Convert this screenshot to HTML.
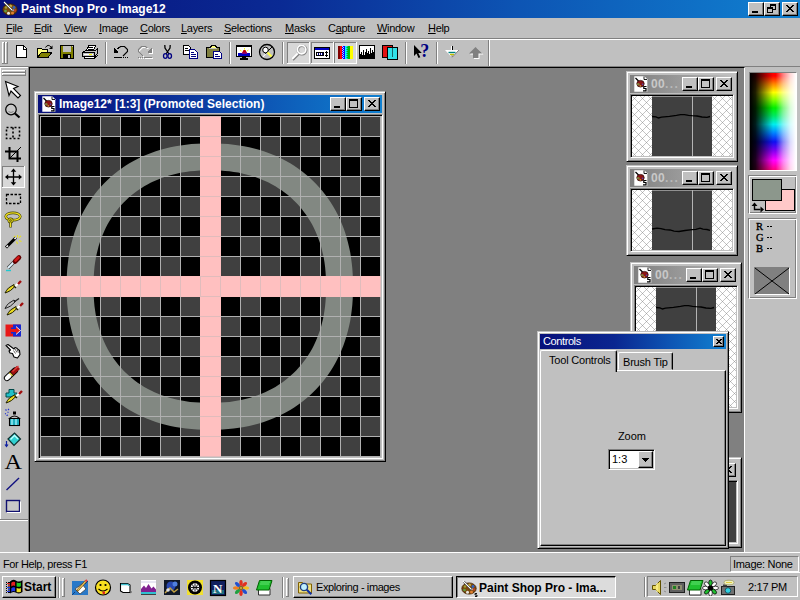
<!DOCTYPE html>
<html><head><meta charset="utf-8">
<style>
*{box-sizing:border-box;margin:0;padding:0}
html,body{width:800px;height:600px;overflow:hidden;background:#c0c0c0;font-family:"Liberation Sans",sans-serif;font-size:11px;color:#000}
.a{position:absolute}
svg{position:absolute;overflow:visible}
#title{left:0;top:0;width:800px;height:18px;background:linear-gradient(90deg,#08107a 0%,#0a2a94 35%,#0d55b4 65%,#1080d0 100%)}
.tt{color:#fff;font-weight:bold;font-size:12px;line-height:14px;white-space:nowrap}
.cb{position:absolute;background:#c0c0c0;border:1px solid;border-color:#fff #000 #000 #fff;box-shadow:inset -1px -1px 0 #808080}
#menu{left:0;top:18px;width:800px;height:20px;background:#c0c0c0}
#menu span{position:absolute;top:4px;font-size:11px;line-height:13px;white-space:nowrap;letter-spacing:-0.300px}
#menu u{text-decoration:underline}
#tb{left:0;top:38px;width:800px;height:29px;background:#c0c0c0;border-top:1px solid #808080;box-shadow:inset 0 1px 0 #fff}
#ws{left:29px;top:67px;width:716px;height:486px;background:#808080;border:1px solid;border-color:#000 #fff #fff #000}
#tools{left:0;top:67px;width:29px;height:485px;background:#c0c0c0}
#status{left:0;top:552px;width:800px;height:20px;background:#c0c0c0;border-top:1px solid #fff}
#task{left:0;top:572px;width:800px;height:28px;background:#c0c0c0;border-top:1px solid #fff}
.win{position:absolute;background:#c0c0c0;border:1px solid;border-color:#c0c0c0 #000 #000 #c0c0c0;box-shadow:inset 1px 1px 0 #fff,inset -1px -1px 0 #808080}
.ce{position:absolute;border:1px solid;border-color:#808080 #fff #fff #808080;box-shadow:inset 1px 1px 0 #000,inset -1px -1px 0 #c0c0c0}
.tbar{position:absolute;height:18px}
.act{background:linear-gradient(90deg,#08107a 0%,#0a2a94 35%,#0d55b4 65%,#1080d0 100%)}
.ina{background:linear-gradient(90deg,#808080 0%,#a0a0a0 60%,#c0c0c0 100%)}
</style></head><body>
<div id="title" class="a"><svg width="18" height="16" style="left:1px;top:1px" viewBox="0 0 18 16"><ellipse cx="9" cy="8.500" rx="7.200" ry="5.600" fill="#7a4a10"/><ellipse cx="9" cy="8.500" rx="7.200" ry="5.600" fill="none" stroke="#402000" stroke-width=".8"/><circle cx="9.500" cy="5" r="1.500" fill="#c8b040"/><circle cx="13" cy="6.500" r="1.400" fill="#3060c0"/><circle cx="14" cy="9.500" r="1.300" fill="#c04020"/><circle cx="11.500" cy="12" r="1.500" fill="#e08030"/><circle cx="7.500" cy="12.300" r="1.500" fill="#e8e8e0"/><circle cx="4.500" cy="10" r="1.300" fill="#60a040"/><circle cx="5" cy="6.500" r="1.200" fill="#a0a030"/><circle cx="12" cy="9.300" r="1" fill="#c0c0c0"/><path d="M3.800 1.800l8 8" stroke="#101010" stroke-width="2"/><path d="M3 1l8.500 8.500" stroke="#fff" stroke-width="1.100"/></svg><div class="a tt" style="left:21px;top:2px">Paint Shop Pro - Image12</div>
<div class="cb" style="left:748px;top:2px;width:16px;height:14px"><svg width="14" height="12" style="left:0;top:0" shape-rendering="crispEdges"><path d="M3 8h6v2H3z" fill="#000"/></svg></div>
<div class="cb" style="left:764px;top:2px;width:16px;height:14px"><svg width="14" height="12" style="left:0;top:0" shape-rendering="crispEdges"><path d="M5 1h6v6H8V6h2V3H6v1H5zM2 4h6v6H2zM3 6v3h4V6z" fill="#000" fill-rule="evenodd"/></svg></div>
<div class="cb" style="left:782px;top:2px;width:16px;height:14px"><svg width="14" height="12" style="left:0;top:0" shape-rendering="crispEdges"><path d="M3 2h2v1h-2zM9 2h2v1h-2zM4 3h2v1h-2zM8 3h2v1h-2zM5 4h4v1h-4zM6 5h2v1h-2zM5 6h4v1h-4zM4 7h2v1h-2zM8 7h2v1h-2zM3 8h2v1h-2zM9 8h2v1h-2z" fill="#000"/></svg></div>
</div>
<div id="menu" class="a">
<span style="left:6px"><u>F</u>ile</span><span style="left:34px"><u>E</u>dit</span><span style="left:64px"><u>V</u>iew</span><span style="left:99px"><u>I</u>mage</span><span style="left:140px"><u>C</u>olors</span><span style="left:181px"><u>L</u>ayers</span><span style="left:224px"><u>S</u>elections</span><span style="left:285px"><u>M</u>asks</span><span style="left:328px">C<u>a</u>pture</span><span style="left:377px"><u>W</u>indow</span><span style="left:428px"><u>H</u>elp</span>
</div>
<div id="tb" class="a"></div>
<div id="tools" class="a"></div>
<div id="ws" class="a"></div>
<svg class="a" style="left:0;top:38px" width="800" height="30" viewBox="0 38 800 30" shape-rendering="crispEdges">
<defs><pattern id="dith" width="2" height="2" patternUnits="userSpaceOnUse"><rect width="2" height="2" fill="#c0c0c0"/><rect width="1" height="1" fill="#fff"/><rect x="1" y="1" width="1" height="1" fill="#fff"/></pattern></defs>
<!-- toolbar frame -->
<rect x="0" y="38" width="800" height="1" fill="#808080"/><rect x="0" y="39" width="800" height="1" fill="#fff"/>
<rect x="0" y="66" width="800" height="1" fill="#808080"/>
<rect x="488" y="40" width="1" height="26" fill="#808080"/><rect x="489" y="40" width="1" height="26" fill="#fff"/>
<!-- grip -->
<g id="grip"><rect x="2" y="42" width="3" height="22" fill="#c0c0c0"/><rect x="2" y="42" width="1" height="22" fill="#fff"/><rect x="2" y="42" width="3" height="1" fill="#fff"/><rect x="4" y="42" width="1" height="22" fill="#808080"/><rect x="2" y="63" width="3" height="1" fill="#808080"/></g>
<use href="#grip" x="3"/>
<!-- separators -->
<g fill="#808080"><rect x="105" y="42" width="1" height="22"/><rect x="229" y="42" width="1" height="22"/><rect x="282" y="42" width="1" height="22"/><rect x="405" y="42" width="1" height="22"/><rect x="436" y="42" width="1" height="22"/></g>
<g fill="#fff"><rect x="106" y="42" width="1" height="22"/><rect x="230" y="42" width="1" height="22"/><rect x="283" y="42" width="1" height="22"/><rect x="406" y="42" width="1" height="22"/><rect x="437" y="42" width="1" height="22"/></g>
<!-- pressed (checked) buttons -->
<g id="pb"><rect x="287" y="42" width="23" height="22" fill="#d8d8d8"/><rect x="287" y="42" width="23" height="1" fill="#808080"/><rect x="287" y="42" width="1" height="22" fill="#808080"/><rect x="287" y="63" width="23" height="1" fill="#fff"/><rect x="309" y="42" width="1" height="22" fill="#fff"/></g>
<use href="#pb" x="24"/><use href="#pb" x="47"/>
<!-- new -->
<path d="M16.500 45.500h7l3 3v9h-10z" fill="#fff" stroke="#000" stroke-width="1" shape-rendering="crispEdges"/><path d="M23 46v3h3" fill="none" stroke="#000"/>
<!-- open -->
<path d="M37.500 57.500v-9.500h3.500l1 1.500h5.500v3" fill="#ffff80" stroke="#000"/><path d="M38 49h3l1 1h5v2h-6l-3 5z" fill="#ffff80"/>
<path d="M37.500 57.500l4-5.500h10.500l-4 5.500z" fill="#808000" stroke="#000"/>
<path d="M45.500 47.500q2.500-4 5.500-0.500" fill="none" stroke="#000" shape-rendering="geometricPrecision"/><path d="M52.500 45.500v3.500h-3.500z" fill="#000" shape-rendering="geometricPrecision"/>
<!-- save -->
<rect x="60.500" y="45.500" width="13" height="13" fill="#808000" stroke="#000"/><rect x="63" y="46" width="8" height="6" fill="#c0c0c0"/><rect x="63" y="54" width="8" height="4" fill="#000"/><rect x="68" y="55" width="2" height="3" fill="#c0c0c0"/><rect x="72" y="46" width="1" height="1" fill="#c0c0c0"/>
<!-- print -->
<path d="M86.500 50.500l2-5h7l-2 5z" fill="#fff" stroke="#000"/><path d="M88 47.500h5M87.500 49h5" stroke="#000" fill="none"/>
<path d="M82.500 52.500l3-2h10l2-2v5l-3 3.500v-4.500z" fill="#c0c0c0" stroke="#000"/>
<rect x="82.500" y="52.500" width="12" height="4" fill="#c0c0c0" stroke="#000"/><rect x="84" y="54" width="9" height="1" fill="#fff"/><rect x="89" y="54" width="3" height="1" fill="#ffff00"/>
<path d="M84.500 56.500v2h10l3-3" fill="none" stroke="#000"/><rect x="85" y="57" width="9" height="1" fill="#fff"/>
<!-- undo -->
<g id="undo"><path d="M114 48h1v1h-1zM114 49h2v1h-2zM114 50h3v1h-3zM114 51h4v1h-4zM114 52h4v1h-4z M117 48h1v1h-1z M118 47h1v2h-1z" fill="#000"/><path d="M118.500 47.500h1l1-1h4l3 3v2l-4.500 4.500" fill="none" stroke="#000" shape-rendering="geometricPrecision" stroke-width="1.100"/><rect x="114" y="57" width="8" height="1"/><rect x="123" y="57" width="1" height="1"/><rect x="125" y="57" width="1" height="1"/><rect x="127" y="57" width="1" height="1"/></g>
<!-- redo (disabled) -->
<g transform="translate(267 1) scale(-1 1)" fill="#fff" stroke="#fff"><path d="M114 48h1v1h-1zM114 49h2v1h-2zM114 50h3v1h-3zM114 51h4v1h-4zM114 52h4v1h-4z" stroke="none"/><path d="M118.500 47.500h1l1-1h4l3 3v2l-4.500 4.500" fill="none" shape-rendering="geometricPrecision" stroke-width="1.100"/><rect x="114" y="57" width="8" height="1" stroke="none"/><rect x="123" y="57" width="1" height="1" stroke="none"/><rect x="125" y="57" width="1" height="1" stroke="none"/><rect x="127" y="57" width="1" height="1" stroke="none"/></g>
<g transform="translate(266 0) scale(-1 1)" fill="#808080" stroke="#808080"><path d="M114 48h1v1h-1zM114 49h2v1h-2zM114 50h3v1h-3zM114 51h4v1h-4zM114 52h4v1h-4z" stroke="none"/><path d="M118.500 47.500h1l1-1h4l3 3v2l-4.500 4.500" fill="none" shape-rendering="geometricPrecision" stroke-width="1.100"/><rect x="114" y="57" width="8" height="1" stroke="none"/><rect x="123" y="57" width="1" height="1" stroke="none"/><rect x="125" y="57" width="1" height="1" stroke="none"/><rect x="127" y="57" width="1" height="1" stroke="none"/></g>
<!--TB2S--><!-- cut -->
<g shape-rendering="geometricPrecision"><path d="M164.800 45l.2 3 4 6M170.200 45l-.2 3-4 6" fill="none" stroke="#000" stroke-width="1.300"/><ellipse cx="165.300" cy="56" rx="1.800" ry="2.400" fill="none" stroke="#000080" stroke-width="1.300"/><ellipse cx="169.700" cy="56" rx="1.800" ry="2.400" fill="none" stroke="#000080" stroke-width="1.300"/></g>
<!-- copy -->
<path d="M183.500 45.500h5l2 2v6.500h-7z" fill="#fff" stroke="#000"/><path d="M185 48h3M185 50h4" stroke="#000"/>
<path d="M189.500 49.500h5l3 3v5.500h-8z" fill="#fff" stroke="#000080"/><path d="M191 52h3M191 54h5M191 56h5" stroke="#000080" stroke-width="1" transform="translate(0 .5)"/>
<!-- paste -->
<path d="M206.500 47.500h13v10h-13z" fill="#808040" stroke="#000"/><path d="M210.500 47.500l1-2h4l1 2v1h-6z" fill="#ffff80" stroke="#000"/><rect x="209" y="48" width="8" height="1" fill="#c0c0c0"/>
<path d="M213.500 51.500h6l2 2v5h-8z" fill="#fff" stroke="#000080"/><path d="M215 54.500h3M215 56.500h5" stroke="#000080"/>
<!-- monitor -->
<rect x="236.500" y="45.500" width="15" height="11" fill="#fff" stroke="#000" stroke-width="1"/><rect x="237" y="46" width="14" height="1" fill="#000"/><rect x="238" y="53" width="12" height="3" fill="#0000c0"/><rect x="238" y="52" width="12" height="1" fill="#fff"/>
<path d="M242 53l1.500-3h2l1.500 3z" fill="#c00000" shape-rendering="geometricPrecision"/><path d="M241.500 54l1-1.500h4l1 1.500z" fill="#800080" shape-rendering="geometricPrecision"/><path d="M240 50l1.500 1M248.500 50l-1.500 1M244.500 48v1.500" stroke="#ffff00" shape-rendering="geometricPrecision"/>
<rect x="242" y="57" width="4" height="1" fill="#000"/><rect x="240" y="58" width="8" height="2" fill="#000"/>
<!-- circle -->
<g shape-rendering="geometricPrecision"><circle cx="267" cy="52" r="7.500" fill="#c0c0c0" stroke="#000" stroke-width="1.300"/><path d="M262 57l10-10" stroke="#000" stroke-width="1"/><circle cx="265.500" cy="50" r="2.800" fill="#fff" stroke="#000" stroke-width="1"/><path d="M267.500 52.500l4 4" stroke="#ffff40" stroke-width="2.200"/><path d="M262.500 57l3-3" stroke="#fff" stroke-width="1.200"/></g>
<!-- zoom tool -->
<g shape-rendering="geometricPrecision"><path d="M292.500 59.500l6-6" stroke="#808080" stroke-width="3.200"/><path d="M292 59l6-6" stroke="#fff" stroke-width="2.200"/><circle cx="302" cy="50" r="4.200" fill="none" stroke="#808080" stroke-width="2.600"/><circle cx="301.600" cy="49.600" r="4.200" fill="none" stroke="#fff" stroke-width="1.800"/></g>
<!-- controls -->
<rect x="314.500" y="47.500" width="15" height="11" fill="#fff" stroke="#000"/><rect x="315" y="48" width="14" height="2" fill="#0000c0"/><rect x="316.500" y="52.500" width="7" height="3" fill="#fff" stroke="#000"/><rect x="318" y="53" width="1" height="2" fill="#000080"/><rect x="320" y="53" width="1" height="2" fill="#000080"/><rect x="322" y="53" width="1" height="2" fill="#000080"/><path d="M326.500 51v6M325 52.500h3M325 55.500h3" stroke="#000"/>
<!-- palette -->
<g><rect x="338" y="46" width="2" height="13" fill="#800000"/><rect x="340" y="46" width="3" height="13" fill="#ff0000"/><rect x="342" y="46" width="3" height="13" fill="#0000ff"/><rect x="345" y="46" width="2" height="13" fill="#00ffff"/><rect x="347" y="46" width="3" height="13" fill="#00c000"/><rect x="350" y="46" width="3" height="13" fill="#ffff00"/>
<path d="M342 46h1v1h-1zM343 47h1v1h-1zM342 48h1v1h-1zM343 49h1v1h-1zM342 50h1v1h-1zM343 51h1v1h-1zM342 52h1v1h-1zM343 53h1v1h-1zM342 54h1v1h-1zM343 55h1v1h-1zM342 56h1v1h-1zM343 57h1v1h-1zM342 58h1v1h-1z" fill="#c0c0ff"/>
<path d="M347 46h1v1h-1zM346 47h1v1h-1zM347 48h1v1h-1zM346 49h1v1h-1zM347 50h1v1h-1zM346 51h1v1h-1zM347 52h1v1h-1zM346 53h1v1h-1zM347 54h1v1h-1zM346 55h1v1h-1zM347 56h1v1h-1zM346 57h1v1h-1zM347 58h1v1h-1z" fill="#00c0a0"/></g>
<!-- histogram -->
<rect x="359.500" y="45.500" width="15" height="13" fill="#fff" stroke="#000"/><path d="M360 58v-4h1v-2h1v3h1v-5h1v5h1v-3h1v-3h1v4h1v-2h1v3h1v-6h1v5h1v-3h1v2h1v6z" fill="#000"/>
<!-- layers -->
<rect x="382.500" y="45.500" width="10" height="12" fill="#e01010" stroke="#000"/><rect x="387.500" y="47.500" width="10" height="12" fill="#30e0e8" stroke="#000"/><rect x="392" y="48" width="1" height="9" fill="#000" opacity=".55"/>
<!-- help -->
<path d="M414 45v11l2.500-2.500 2 4.500 1.800-.8-2-4.200h3.500z" fill="#000" shape-rendering="geometricPrecision"/>
<text x="420.300" y="56.800" font-family="Liberation Serif" font-weight="bold" font-size="18" fill="#000080" shape-rendering="geometricPrecision">?</text>
<!-- down arrow -->
<g shape-rendering="geometricPrecision"><path d="M445 50h14l-7 7.500z" fill="#fff"/><path d="M459 50l-7 7.500" stroke="#808080" stroke-width="1"/><rect x="451" y="46" width="2" height="4" fill="#fff"/><rect x="452" y="46" width="1" height="4" fill="#000"/><path d="M448.500 52.500h7" stroke="#008080" stroke-width="1.400"/><path d="M450 54.500h4" stroke="#c0c000" stroke-width="1.400"/><path d="M451.500 56h1" stroke="#000" stroke-width="1"/></g>
<!-- up arrow -->
<g shape-rendering="geometricPrecision"><path d="M476.500 48l7 6.500h-4v4.500h-5.500v-4.500h-4z" fill="#fff"/><path d="M475.500 47l7 6.500h-4v4.500h-5.500v-4.500h-4z" fill="#808080"/></g>
<!--TB2E-->
</svg>
<svg class="a" style="left:0;top:67px" width="30" height="486" viewBox="0 67 30 486" shape-rendering="crispEdges">
<rect x="0" y="67" width="28" height="1" fill="#fff"/><rect x="0" y="67" width="1" height="452" fill="#fff"/>
<rect x="0" y="519" width="28" height="1" fill="#808080"/><rect x="0" y="520" width="28" height="1" fill="#fff"/>
<rect x="28" y="67" width="1" height="486" fill="#808080"/>
<!-- grip -->
<g id="hg"><rect x="2" y="70" width="24" height="3" fill="#c0c0c0"/><rect x="2" y="70" width="24" height="1" fill="#fff"/><rect x="2" y="70" width="1" height="3" fill="#fff"/><rect x="2" y="72" width="24" height="1" fill="#808080"/><rect x="25" y="70" width="1" height="3" fill="#808080"/></g><use href="#hg" y="3"/>
<!-- selected (mover) button -->
<rect x="2" y="166" width="23" height="22" fill="#d8d8d8"/><rect x="2" y="166" width="23" height="1" fill="#808080"/><rect x="2" y="166" width="1" height="22" fill="#808080"/><rect x="2" y="187" width="23" height="1" fill="#fff"/><rect x="24" y="166" width="1" height="22" fill="#fff"/>
<g shape-rendering="geometricPrecision">
<!-- arrow -->
<path d="M5.500 81.500l12.500 5-4.500 2 7 7-2.500 2.500-7-7-2 4.500z" fill="#fff" stroke="#000" stroke-width="1.100" stroke-linejoin="miter"/>
<!-- zoom -->
<circle cx="11" cy="109.500" r="5.300" fill="#c8c8c8" stroke="#000" stroke-width="1.200"/><path d="M8.500 111.500q2.500 2 5 0" stroke="#808080" fill="none"/><path d="M15 113.500l4.500 4" stroke="#000" stroke-width="2.200"/>
<!-- dotted rect -->
<path d="M6.500 127.500h13v11h-13zM13 127.500v11" fill="none" stroke="#000" stroke-width="1.600" stroke-dasharray="2 2"/>
<!-- crop -->
<path d="M9.500 147v11.500h11.500M5 151.500h12.500v10.500" fill="none" stroke="#000" stroke-width="2"/><path d="M10 158l11-11" stroke="#000" stroke-width="1"/>
<!-- mover -->
<path d="M13.500 170v14M6.500 177h14" stroke="#000" stroke-width="1.300"/><path d="M13.500 168.500l2.800 3.200h-5.600zM13.500 185.500l2.800-3.200h-5.600zM5 177l3.200-2.800v5.600zM22 177l-3.200-2.800v5.600z" fill="#000"/>
<!-- selection -->
<rect x="6.500" y="194.500" width="14" height="9" fill="none" stroke="#000" stroke-width="1.300" stroke-dasharray="2.500 1.500"/>
<!-- lasso -->
<ellipse cx="13" cy="216.500" rx="7.300" ry="3.600" fill="none" stroke="#404000" stroke-width="2.600"/><ellipse cx="13" cy="216.500" rx="7.300" ry="3.600" fill="none" stroke="#f0e020" stroke-width="1.400"/><circle cx="10.500" cy="220.500" r="1.800" fill="none" stroke="#404000" stroke-width="2.200"/><circle cx="10.500" cy="220.500" r="1.800" fill="none" stroke="#f0e020" stroke-width="1.100"/><path d="M10.500 222.500v5" stroke="#404000" stroke-width="2.400"/><path d="M10.500 222.500v4.500" stroke="#f0e020" stroke-width="1.100"/>
<!-- wand -->
<path d="M6 247.500l10-10" stroke="#000" stroke-width="3"/><path d="M6.500 247l1.500-1.500" stroke="#fff" stroke-width="1.600"/><path d="M14.500 239l1.500-1.500" stroke="#fff" stroke-width="1.600"/><path d="M17.500 235v2.500M19 237.500l2-1.500M19 240.500l2.500 1M16.500 241.500l1 2.500M14 236l1 1" stroke="#e8e020" stroke-width="1.100"/>
<!-- dropper -->
<path d="M8 268l8-8" stroke="#404040" stroke-width="3.200"/><path d="M8 268l7-7" stroke="#e0f4ff" stroke-width="1.800"/><path d="M15 261.500l4-4" stroke="#600000" stroke-width="4.600" stroke-linecap="round"/><path d="M15.500 260.500l3-3" stroke="#d01818" stroke-width="2.600" stroke-linecap="round"/><path d="M6 270.500h5" stroke="#20c8d0" stroke-width="1.400"/>
<!-- brush -->
<g id="br"><path d="M5 293q3-1 5.500-2.500l5-4.500-1.500-1.500-5.500 3.500q-2 2-3.500 5z" fill="#e8d820" stroke="#202000" stroke-width="1"/><path d="M14.500 287l4.500-4.500" stroke="#fff" stroke-width="2.200"/><path d="M18 284l3-3" stroke="#a01010" stroke-width="2.400"/><path d="M13.500 285.500l2.500 2.500" stroke="#202000" stroke-width="1.300"/></g>
<!-- clone -->
<use href="#br" x="2" y="22"/><path d="M5 308.500q3-1 5.500-2.500l5-4.500-1.500-1.500-5.500 3.500q-2 2-3.500 5z" fill="#c0c0c0" stroke="#202020" stroke-width="1"/><path d="M14 302l5-3.500" stroke="#202020" stroke-width="1.200"/>
<!-- replacer -->
<rect x="5.500" y="324.500" width="15" height="12" fill="#e81818" stroke="none"/><path d="M13 324.500h8v12h-8v-3h-2v-6h2z" fill="#1828d0"/><path d="M11 329h5v-2.500l4.500 4-4.500 4v-2.500h-5z" fill="#e81818"/><path d="M16 326.500l4.500 4-4.500 4" fill="none" stroke="#fff" stroke-width=".9"/>
<!-- retouch hand -->
<path d="M6 345.500l2-1 6 4.500 1-1.500 2 .8 1 1.200 1.500 1 .5 4-2.500 3.500-3.500-1-1.500-3.500-2.500-.5-1-2 1.500-1z" fill="#fff" stroke="#000" stroke-width="1.100" stroke-linejoin="round"/><path d="M15 349l2 3.500M17 349.500l1.500 3M13.500 350.500l2 3" stroke="#505050" stroke-width=".9"/>
<!-- eraser -->
<path d="M7 378l8-7.500" stroke="#000" stroke-width="6.200" stroke-linecap="round"/><path d="M7 378l2.500-2.300" stroke="#fff" stroke-width="4.400" stroke-linecap="round"/><path d="M10.500 374.800l1-1" stroke="#e8d040" stroke-width="4.400"/><path d="M12 373.300l6.500-6" stroke="#a01010" stroke-width="4.400"/><path d="M12.500 371.500l6-5.500" stroke="#e04040" stroke-width="1.200"/>
<!-- tube / stamp+brush -->
<path d="M9 389.500h5v3.500h3v4h-11v-4h3z" fill="#20c0c8" stroke="#004848" stroke-width="1"/><use href="#br" x="1" y="110"/>
<!-- airbrush -->
<rect x="9.500" y="418.500" width="10" height="7" fill="#20b0c0" stroke="#000" stroke-width="1.100"/><path d="M9.500 418.500q5-5 10 0z" fill="#c0c0c0" stroke="#000" stroke-width="1.100"/><path d="M12 419v6M16 419v6" stroke="#a0f0f8" stroke-width="1.400"/><rect x="13" y="411.500" width="3" height="3" fill="#000"/><path d="M5.500 409.500l1 1M7.500 412l1 .5M5 413.500l1 .5M8 409l1 1M6.500 415.500l1.500-.5" stroke="#2030d0" stroke-width="1.100"/>
<!-- fill -->
<path d="M8 439l6.500-6 6 6-6.500 6.500z" fill="#30d0d0" stroke="#103030" stroke-width="1.200"/><path d="M10.500 439.500l4-4 3.500 3.500" fill="none" stroke="#c0ffff" stroke-width="1.300"/><path d="M6.500 441v5M5 444.500l1.500 2 1.500-2" stroke="#1020a0" stroke-width="1.200" fill="none"/>
<!-- text -->
<text x="4.500" y="468.500" font-family="Liberation Serif" font-size="21" textLength="17.500" lengthAdjust="spacingAndGlyphs" fill="#000">A</text>
<!-- line -->
<path d="M6.500 490l12.500-12" stroke="#101080" stroke-width="1.400"/>
<!-- shape -->
<rect x="6.500" y="500.500" width="13" height="11" fill="#c8c8c8" stroke="#101070" stroke-width="1.400"/><path d="M7 512.500h13.500v-11" fill="none" stroke="#fff" stroke-width="1"/>
</g>
</svg>
<div class="win" style="left:34px;top:91px;width:352px;height:371px">
<div class="tbar act" style="left:3px;top:3px;width:344px"><div class="a tt" style="left:21px;top:2px">Image12* [1:3] (Promoted Selection)</div>
<svg width="14" height="16" style="left:4px;top:1px" viewBox="0 0 14 16"><use href="#docicon"/></svg>
<div class="cb" style="left:292px;top:2px;width:16px;height:14px"><svg width="14" height="12" style="left:0;top:0" shape-rendering="crispEdges"><path d="M3 8h6v2H3z" fill="#000"/></svg></div>
<div class="cb" style="left:308px;top:2px;width:16px;height:14px"><svg width="14" height="12" style="left:0;top:0" shape-rendering="crispEdges"><path d="M2 1h9v9H2zM3 3v6h7V3z" fill="#000" fill-rule="evenodd"/></svg></div>
<div class="cb" style="left:326px;top:2px;width:16px;height:14px"><svg width="14" height="12" style="left:0;top:0" shape-rendering="crispEdges"><path d="M3 2h2v1h-2zM9 2h2v1h-2zM4 3h2v1h-2zM8 3h2v1h-2zM5 4h4v1h-4zM6 5h2v1h-2zM5 6h4v1h-4zM4 7h2v1h-2zM8 7h2v1h-2zM3 8h2v1h-2zM9 8h2v1h-2z" fill="#000"/></svg></div>
</div>
<div class="ce" style="left:3px;top:22px;width:345px;height:345px"></div>
<svg class="a" style="left:5px;top:24px" width="341" height="341" viewBox="0 0 341 341" shape-rendering="crispEdges">
<rect width="341" height="341" fill="#000"/>
<path d="M20 0h20v20h-20zM60 0h20v20h-20zM100 0h20v20h-20zM140 0h20v20h-20zM200 0h20v20h-20zM240 0h20v20h-20zM280 0h20v20h-20zM320 0h20v20h-20zM0 20h20v20h-20zM40 20h20v20h-20zM80 20h20v20h-20zM120 20h20v20h-20zM180 20h20v20h-20zM220 20h20v20h-20zM260 20h20v20h-20zM300 20h20v20h-20zM20 40h20v20h-20zM60 40h20v20h-20zM100 40h20v20h-20zM140 40h20v20h-20zM200 40h20v20h-20zM240 40h20v20h-20zM280 40h20v20h-20zM320 40h20v20h-20zM0 60h20v20h-20zM40 60h20v20h-20zM80 60h20v20h-20zM120 60h20v20h-20zM180 60h20v20h-20zM220 60h20v20h-20zM260 60h20v20h-20zM300 60h20v20h-20zM20 80h20v20h-20zM60 80h20v20h-20zM100 80h20v20h-20zM140 80h20v20h-20zM200 80h20v20h-20zM240 80h20v20h-20zM280 80h20v20h-20zM320 80h20v20h-20zM0 100h20v20h-20zM40 100h20v20h-20zM80 100h20v20h-20zM120 100h20v20h-20zM180 100h20v20h-20zM220 100h20v20h-20zM260 100h20v20h-20zM300 100h20v20h-20zM20 120h20v20h-20zM60 120h20v20h-20zM100 120h20v20h-20zM140 120h20v20h-20zM200 120h20v20h-20zM240 120h20v20h-20zM280 120h20v20h-20zM320 120h20v20h-20zM0 140h20v20h-20zM40 140h20v20h-20zM80 140h20v20h-20zM120 140h20v20h-20zM180 140h20v20h-20zM220 140h20v20h-20zM260 140h20v20h-20zM300 140h20v20h-20zM20 180h20v20h-20zM60 180h20v20h-20zM100 180h20v20h-20zM140 180h20v20h-20zM200 180h20v20h-20zM240 180h20v20h-20zM280 180h20v20h-20zM320 180h20v20h-20zM0 200h20v20h-20zM40 200h20v20h-20zM80 200h20v20h-20zM120 200h20v20h-20zM180 200h20v20h-20zM220 200h20v20h-20zM260 200h20v20h-20zM300 200h20v20h-20zM20 220h20v20h-20zM60 220h20v20h-20zM100 220h20v20h-20zM140 220h20v20h-20zM200 220h20v20h-20zM240 220h20v20h-20zM280 220h20v20h-20zM320 220h20v20h-20zM0 240h20v20h-20zM40 240h20v20h-20zM80 240h20v20h-20zM120 240h20v20h-20zM180 240h20v20h-20zM220 240h20v20h-20zM260 240h20v20h-20zM300 240h20v20h-20zM20 260h20v20h-20zM60 260h20v20h-20zM100 260h20v20h-20zM140 260h20v20h-20zM200 260h20v20h-20zM240 260h20v20h-20zM280 260h20v20h-20zM320 260h20v20h-20zM0 280h20v20h-20zM40 280h20v20h-20zM80 280h20v20h-20zM120 280h20v20h-20zM180 280h20v20h-20zM220 280h20v20h-20zM260 280h20v20h-20zM300 280h20v20h-20zM20 300h20v20h-20zM60 300h20v20h-20zM100 300h20v20h-20zM140 300h20v20h-20zM200 300h20v20h-20zM240 300h20v20h-20zM280 300h20v20h-20zM320 300h20v20h-20zM0 320h20v20h-20zM40 320h20v20h-20zM80 320h20v20h-20zM120 320h20v20h-20zM180 320h20v20h-20zM220 320h20v20h-20zM260 320h20v20h-20zM300 320h20v20h-20z" fill="#404040"/>
<path d="M313.0 170.6L312.9 177.4L312.7 183.3L312.3 189.0L311.7 194.4L311.0 199.8L310.2 204.9L309.1 210.0L307.9 215.0L306.6 219.8L305.1 224.6L303.5 229.3L301.7 233.8L299.8 238.3L297.7 242.6L295.4 246.9L293.1 251.0L290.6 255.0L287.9 258.9L285.1 262.7L282.2 266.4L279.1 270.0L275.9 273.4L272.6 276.7L269.2 279.9L265.6 283.0L261.9 285.9L258.1 288.7L254.2 291.4L250.2 293.9L246.1 296.2L241.8 298.5L237.5 300.6L233.0 302.5L228.5 304.3L223.8 305.9L219.0 307.4L214.2 308.7L209.2 309.9L204.1 311.0L199.0 311.8L193.6 312.5L188.2 313.1L182.5 313.5L176.6 313.7L169.8 313.8L163.0 313.7L157.1 313.5L151.4 313.1L146.0 312.5L140.6 311.8L135.5 311.0L130.4 309.9L125.4 308.7L120.6 307.4L115.8 305.9L111.1 304.3L106.6 302.5L102.1 300.6L97.8 298.5L93.5 296.2L89.4 293.9L85.4 291.4L81.5 288.7L77.7 285.9L74.0 283.0L70.4 279.9L67.0 276.7L63.7 273.4L60.5 270.0L57.4 266.4L54.5 262.7L51.7 258.9L49.0 255.0L46.5 251.0L44.2 246.9L41.9 242.6L39.8 238.3L37.9 233.8L36.1 229.3L34.5 224.6L33.0 219.8L31.7 215.0L30.5 210.0L29.4 204.9L28.6 199.8L27.9 194.4L27.3 189.0L26.9 183.3L26.7 177.4L26.6 170.6L26.7 163.8L26.9 157.9L27.3 152.2L27.9 146.8L28.6 141.4L29.4 136.3L30.5 131.2L31.7 126.2L33.0 121.4L34.5 116.6L36.1 111.9L37.9 107.4L39.8 102.9L41.9 98.6L44.2 94.3L46.5 90.2L49.0 86.2L51.7 82.3L54.5 78.5L57.4 74.8L60.5 71.2L63.7 67.8L67.0 64.5L70.4 61.3L74.0 58.2L77.7 55.3L81.5 52.5L85.4 49.8L89.4 47.3L93.5 45.0L97.8 42.7L102.1 40.6L106.6 38.7L111.1 36.9L115.8 35.3L120.6 33.8L125.4 32.5L130.4 31.3L135.5 30.2L140.6 29.4L146.0 28.7L151.4 28.1L157.1 27.7L163.0 27.5L169.8 27.4L176.6 27.5L182.5 27.7L188.2 28.1L193.6 28.7L199.0 29.4L204.1 30.2L209.2 31.3L214.2 32.5L219.0 33.8L223.8 35.3L228.5 36.9L233.0 38.7L237.5 40.6L241.8 42.7L246.1 45.0L250.2 47.3L254.2 49.8L258.1 52.5L261.9 55.3L265.6 58.2L269.2 61.3L272.6 64.5L275.9 67.8L279.1 71.2L282.2 74.8L285.1 78.5L287.9 82.3L290.6 86.2L293.1 90.2L295.4 94.3L297.7 98.6L299.8 102.9L301.7 107.4L303.5 111.9L305.1 116.6L306.6 121.4L307.9 126.2L309.1 131.2L310.2 136.3L311.0 141.4L311.7 146.8L312.3 152.2L312.7 157.9L312.9 163.8zM286.1 170.6L286.0 176.3L285.8 181.2L285.5 185.8L285.1 190.3L284.5 194.6L283.8 198.9L283.0 203.0L282.0 207.0L281.0 211.0L279.8 214.8L278.4 218.6L277.0 222.3L275.4 225.9L273.8 229.4L272.0 232.9L270.1 236.2L268.0 239.5L265.9 242.7L263.6 245.7L261.3 248.7L258.8 251.6L256.2 254.4L253.6 257.0L250.8 259.6L247.9 262.1L244.9 264.4L241.9 266.7L238.7 268.8L235.4 270.9L232.1 272.8L228.6 274.6L225.1 276.2L221.5 277.8L217.8 279.2L214.0 280.6L210.2 281.8L206.2 282.8L202.2 283.8L198.1 284.6L193.8 285.3L189.5 285.9L185.0 286.3L180.4 286.6L175.5 286.8L169.8 286.9L164.1 286.8L159.2 286.6L154.6 286.3L150.1 285.9L145.8 285.3L141.5 284.6L137.4 283.8L133.4 282.8L129.4 281.8L125.6 280.6L121.8 279.2L118.1 277.8L114.5 276.2L111.0 274.6L107.5 272.8L104.2 270.9L100.9 268.8L97.7 266.7L94.7 264.4L91.7 262.1L88.8 259.6L86.0 257.0L83.4 254.4L80.8 251.6L78.3 248.7L76.0 245.7L73.7 242.7L71.6 239.5L69.5 236.2L67.6 232.9L65.8 229.4L64.2 225.9L62.6 222.3L61.2 218.6L59.8 214.8L58.6 211.0L57.6 207.0L56.6 203.0L55.8 198.9L55.1 194.6L54.5 190.3L54.1 185.8L53.8 181.2L53.6 176.3L53.5 170.6L53.6 164.9L53.8 160.0L54.1 155.4L54.5 150.9L55.1 146.6L55.8 142.3L56.6 138.2L57.6 134.2L58.6 130.2L59.8 126.4L61.2 122.6L62.6 118.9L64.2 115.3L65.8 111.8L67.6 108.3L69.5 105.0L71.6 101.7L73.7 98.5L76.0 95.5L78.3 92.5L80.8 89.6L83.4 86.8L86.0 84.2L88.8 81.6L91.7 79.1L94.7 76.8L97.7 74.5L100.9 72.4L104.2 70.3L107.5 68.4L111.0 66.6L114.5 65.0L118.1 63.4L121.8 62.0L125.6 60.6L129.4 59.4L133.4 58.4L137.4 57.4L141.5 56.6L145.8 55.9L150.1 55.3L154.6 54.9L159.2 54.6L164.1 54.4L169.8 54.3L175.5 54.4L180.4 54.6L185.0 54.9L189.5 55.3L193.8 55.9L198.1 56.6L202.2 57.4L206.2 58.4L210.2 59.4L214.0 60.6L217.8 62.0L221.5 63.4L225.1 65.0L228.6 66.6L232.1 68.4L235.4 70.3L238.7 72.4L241.9 74.5L244.9 76.8L247.9 79.1L250.8 81.6L253.6 84.2L256.2 86.8L258.8 89.6L261.3 92.5L263.6 95.5L265.9 98.5L268.0 101.7L270.1 105.0L272.0 108.3L273.8 111.8L275.4 115.3L277.0 118.9L278.4 122.6L279.8 126.4L281.0 130.2L282.0 134.2L283.0 138.2L283.8 142.3L284.5 146.6L285.1 150.9L285.5 155.4L285.8 160.0L286.0 164.9z" fill="#828882" fill-rule="evenodd" shape-rendering="geometricPrecision"/>
<path d="M0 0h1v341h-1zM0 0h341v1h-341zM20 0h1v341h-1zM0 20h341v1h-341zM40 0h1v341h-1zM0 40h341v1h-341zM60 0h1v341h-1zM0 60h341v1h-341zM80 0h1v341h-1zM0 80h341v1h-341zM100 0h1v341h-1zM0 100h341v1h-341zM120 0h1v341h-1zM0 120h341v1h-341zM140 0h1v341h-1zM0 140h341v1h-341zM160 0h1v341h-1zM0 160h341v1h-341zM180 0h1v341h-1zM0 180h341v1h-341zM200 0h1v341h-1zM0 200h341v1h-341zM220 0h1v341h-1zM0 220h341v1h-341zM240 0h1v341h-1zM0 240h341v1h-341zM260 0h1v341h-1zM0 260h341v1h-341zM280 0h1v341h-1zM0 280h341v1h-341zM300 0h1v341h-1zM0 300h341v1h-341zM320 0h1v341h-1zM0 320h341v1h-341zM340 0h1v341h-1zM0 340h341v1h-341z" fill="#b0b0b0"/>
<path d="M160 0h21v341h-21zM0 160h341v21h-341z" fill="#ffc0c0"/>
<path d="M160 0h21v1h-21zM0 160h1v21h-1zM160 20h21v1h-21zM20 160h1v21h-1zM160 40h21v1h-21zM40 160h1v21h-1zM160 60h21v1h-21zM60 160h1v21h-1zM160 80h21v1h-21zM80 160h1v21h-1zM160 100h21v1h-21zM100 160h1v21h-1zM160 120h21v1h-21zM120 160h1v21h-1zM160 140h21v1h-21zM140 160h1v21h-1zM160 160h21v1h-21zM160 160h1v21h-1zM160 180h21v1h-21zM180 160h1v21h-1zM160 200h21v1h-21zM200 160h1v21h-1zM160 220h21v1h-21zM220 160h1v21h-1zM160 240h21v1h-21zM240 160h1v21h-1zM160 260h21v1h-21zM260 160h1v21h-1zM160 280h21v1h-21zM280 160h1v21h-1zM160 300h21v1h-21zM300 160h1v21h-1zM160 320h21v1h-21zM320 160h1v21h-1zM160 340h21v1h-21zM340 160h1v21h-1z" fill="#e0bcbc"/>
</svg>
</div>

<div class="a" style="left:749px;top:72px;width:48px;height:99px;border:1px solid;border-color:#808080 #fff #fff #808080;background:
linear-gradient(90deg,#000 0%,rgba(0,0,0,.88) 12%,rgba(0,0,0,.45) 30%,rgba(0,0,0,0) 50%,rgba(255,255,255,0) 56%,rgba(255,255,255,.5) 72%,rgba(255,255,255,.85) 88%,#fff 100%),
linear-gradient(180deg,#f00 3%,#ff8000 11%,#ff0 20%,#80ff00 28%,#0e0 36%,#00e860 44%,#0ee 53%,#0080ff 62%,#1010f0 71%,#8000f0 80%,#f0f 90%,#ff0080 100%)"></div>
<!-- swatch frame -->
<div class="a" style="left:748px;top:175px;width:49px;height:39px;border:1px solid;border-color:#808080 #fff #fff #808080;box-shadow:inset 1px 1px 0 #fff,inset -1px -1px 0 #808080"></div>
<div class="a" style="left:765px;top:189px;width:30px;height:22px;border:1px solid #000;background:#ffc8c8"></div>
<div class="a" style="left:752px;top:179px;width:30px;height:22px;border:1px solid #000;background:#8c978c"></div>
<svg class="a" style="left:750px;top:201px" width="16" height="12" viewBox="750 201 16 12"><path d="M754.500 206v3.500h6" fill="none" stroke="#000" stroke-width="1.400"/><path d="M754.500 202.500l3 3.500h-6zM764 209.500l-3.500-3v6z" fill="#000"/></svg>
<!-- rgb frame -->
<div class="a" style="left:748px;top:218px;width:49px;height:81px;border:1px solid;border-color:#808080 #fff #fff #808080;box-shadow:inset 1px 1px 0 #fff,inset -1px -1px 0 #808080"></div>
<div class="a" style="left:756px;top:221px;font-family:'Liberation Serif',serif;font-size:10.500px;line-height:11px;-webkit-text-stroke:0.350px #000">R<br>G<br>B</div>
<svg class="a" style="left:766px;top:220px" width="8" height="32" viewBox="766 220 8 32" shape-rendering="crispEdges"><path d="M767 226h2v1h-2zM770 226h2v1h-2zM767 237h2v1h-2zM770 237h2v1h-2zM767 248h2v1h-2zM770 248h2v1h-2z" fill="#000"/></svg>
<div class="a" style="left:754px;top:267px;width:36px;height:28px;border:1px solid;border-color:#808080 #fff #fff #808080;background:#808080"></div>
<svg class="a" style="left:755px;top:268px" width="34" height="26" viewBox="0 0 34 26"><path d="M0 0L34 26M34 0L0 26" stroke="#000" stroke-width="1"/></svg>
<svg width="0" height="0" style="position:absolute"><defs>
<pattern id="hatch" width="8" height="8" patternUnits="userSpaceOnUse"><rect width="8" height="8" fill="#fff"/><path d="M0 0h1v1h-1zM4 0h1v1h-1zM1 1h1v1h-1zM3 1h1v1h-1zM1 3h1v1h-1zM3 3h1v1h-1zM0 4h1v1h-1zM4 4h1v1h-1zM5 5h1v1h-1zM7 5h1v1h-1zM5 7h1v1h-1zM7 7h1v1h-1z" fill="#c4c4c4" shape-rendering="crispEdges"/><path d="M2 2h1v1h-1zM6 6h1v1h-1z" fill="#a4a4a4" shape-rendering="crispEdges"/></pattern>
<g id="docicon"><path d="M0.300 0.300h10l3 3v12.400h-13z" fill="#fff"/><path d="M10 0.500v3h3" fill="none" stroke="#000" stroke-width=".9"/><path d="M1.500 2l3.500 3.500" stroke="#000" stroke-width="1.300"/><ellipse cx="6.500" cy="7.700" rx="3.700" ry="3.300" fill="#8c1414" stroke="#301010" stroke-width=".8"/><circle cx="4.300" cy="8.200" r="1.300" fill="#80803a"/><circle cx="6.300" cy="9.800" r=".9" fill="#c09030"/><circle cx="8.600" cy="8.300" r=".8" fill="#5050c0"/><path d="M9.300 10.500h3.200M9.800 10.500v2h2.200v2.400h-3" fill="none" stroke="#000" stroke-width="1.200"/></g>
</defs></svg>
<div class="win" style="left:626px;top:71px;width:112px;height:91px"><div class="tbar ina" style="left:3px;top:3px;width:104px"><svg width="14" height="16" style="left:4px;top:1px" viewBox="0 0 14 16"><use href="#docicon"/></svg><div class="a tt" style="left:21px;top:2px;color:#c8c8c8;letter-spacing:0.3px">00<span style="letter-spacing:1.500px;color:#b8b8b8">...</span></div><div class="cb" style="left:52px;top:2px;width:16px;height:14px"><svg width="14" height="12" style="left:0;top:0" shape-rendering="crispEdges"><path d="M3 8h6v2H3z" fill="#000"/></svg></div><div class="cb" style="left:68px;top:2px;width:16px;height:14px"><svg width="14" height="12" style="left:0;top:0" shape-rendering="crispEdges"><path d="M2 1h9v9H2zM3 3v6h7V3z" fill="#000" fill-rule="evenodd"/></svg></div><div class="cb" style="left:86px;top:2px;width:16px;height:14px"><svg width="14" height="12" style="left:0;top:0" shape-rendering="crispEdges"><path d="M3 2h2v1h-2zM9 2h2v1h-2zM4 3h2v1h-2zM8 3h2v1h-2zM5 4h4v1h-4zM6 5h2v1h-2zM5 6h4v1h-4zM4 7h2v1h-2zM8 7h2v1h-2zM3 8h2v1h-2zM9 8h2v1h-2z" fill="#000"/></svg></div></div><div class="ce" style="left:3px;top:22px;width:104px;height:64px"></div><svg width="100" height="60" style="left:5px;top:24px" viewBox="0 0 100 60"><rect width="100" height="60" fill="url(#hatch)"/><rect x="20" width="60" height="60" fill="#404040"/><rect x="20" width="60" height="1" fill="#909090"/><rect x="60" width="1" height="60" fill="#b4b4b4" shape-rendering="crispEdges"/><path d="M20 20.500l4 .3 2.500 1.200 3-.8 8-.8 7-1 4-.8 4 0 4 .8 3.500 .3 5 .3 5 1 5 .3 3-.8" fill="none" stroke="#000" stroke-width="1.300"/></svg></div><div class="win" style="left:626px;top:165px;width:112px;height:91px"><div class="tbar ina" style="left:3px;top:3px;width:104px"><svg width="14" height="16" style="left:4px;top:1px" viewBox="0 0 14 16"><use href="#docicon"/></svg><div class="a tt" style="left:21px;top:2px;color:#c8c8c8;letter-spacing:0.3px">00<span style="letter-spacing:1.500px;color:#b8b8b8">...</span></div><div class="cb" style="left:52px;top:2px;width:16px;height:14px"><svg width="14" height="12" style="left:0;top:0" shape-rendering="crispEdges"><path d="M3 8h6v2H3z" fill="#000"/></svg></div><div class="cb" style="left:68px;top:2px;width:16px;height:14px"><svg width="14" height="12" style="left:0;top:0" shape-rendering="crispEdges"><path d="M2 1h9v9H2zM3 3v6h7V3z" fill="#000" fill-rule="evenodd"/></svg></div><div class="cb" style="left:86px;top:2px;width:16px;height:14px"><svg width="14" height="12" style="left:0;top:0" shape-rendering="crispEdges"><path d="M3 2h2v1h-2zM9 2h2v1h-2zM4 3h2v1h-2zM8 3h2v1h-2zM5 4h4v1h-4zM6 5h2v1h-2zM5 6h4v1h-4zM4 7h2v1h-2zM8 7h2v1h-2zM3 8h2v1h-2zM9 8h2v1h-2z" fill="#000"/></svg></div></div><div class="ce" style="left:3px;top:22px;width:104px;height:64px"></div><svg width="100" height="60" style="left:5px;top:24px" viewBox="0 0 100 60"><rect width="100" height="60" fill="url(#hatch)"/><rect x="20" width="60" height="60" fill="#404040"/><rect x="20" width="60" height="1" fill="#909090"/><rect x="60" width="1" height="60" fill="#b4b4b4" shape-rendering="crispEdges"/><path d="M20 39l5-.8 4 .5 4 1 5 .3 4 1.200 5 .3 6-1 7-.8 4-.3 4-1.200 3 1 4 .3 3 .8" fill="none" stroke="#000" stroke-width="1.300"/></svg></div><div class="win" style="left:630px;top:262px;width:112px;height:151px"><div class="tbar ina" style="left:3px;top:3px;width:104px"><svg width="14" height="16" style="left:4px;top:1px" viewBox="0 0 14 16"><use href="#docicon"/></svg><div class="a tt" style="left:21px;top:2px;color:#c8c8c8;letter-spacing:0.3px">00<span style="letter-spacing:1.500px;color:#b8b8b8">...</span></div><div class="cb" style="left:52px;top:2px;width:16px;height:14px"><svg width="14" height="12" style="left:0;top:0" shape-rendering="crispEdges"><path d="M3 8h6v2H3z" fill="#000"/></svg></div><div class="cb" style="left:68px;top:2px;width:16px;height:14px"><svg width="14" height="12" style="left:0;top:0" shape-rendering="crispEdges"><path d="M2 1h9v9H2zM3 3v6h7V3z" fill="#000" fill-rule="evenodd"/></svg></div><div class="cb" style="left:86px;top:2px;width:16px;height:14px"><svg width="14" height="12" style="left:0;top:0" shape-rendering="crispEdges"><path d="M3 2h2v1h-2zM9 2h2v1h-2zM4 3h2v1h-2zM8 3h2v1h-2zM5 4h4v1h-4zM6 5h2v1h-2zM5 6h4v1h-4zM4 7h2v1h-2zM8 7h2v1h-2zM3 8h2v1h-2zM9 8h2v1h-2z" fill="#000"/></svg></div></div><div class="ce" style="left:3px;top:22px;width:104px;height:124px"></div><svg width="100" height="120" style="left:5px;top:24px" viewBox="0 0 100 120"><rect width="100" height="120" fill="url(#hatch)"/><rect x="20" width="60" height="120" fill="#404040"/><rect x="20" width="60" height="1" fill="#909090"/><rect x="60" width="1" height="120" fill="#b4b4b4" shape-rendering="crispEdges"/><path d="M20 20.500l4 .3 2.500 1.200 3-.8 8-.8 7-1 4-.8 4 0 4 .8 3.500 .3 5 .3 5 1 5 .3 3-.8" fill="none" stroke="#000" stroke-width="1.300"/></svg></div><div class="win" style="left:630px;top:457px;width:112px;height:91px"><div class="tbar ina" style="left:3px;top:3px;width:104px"><svg width="14" height="16" style="left:4px;top:1px" viewBox="0 0 14 16"><use href="#docicon"/></svg><div class="a tt" style="left:21px;top:2px;color:#c8c8c8;letter-spacing:0.3px">00<span style="letter-spacing:1.500px;color:#b8b8b8">...</span></div><div class="cb" style="left:52px;top:2px;width:16px;height:14px"><svg width="14" height="12" style="left:0;top:0" shape-rendering="crispEdges"><path d="M3 8h6v2H3z" fill="#000"/></svg></div><div class="cb" style="left:68px;top:2px;width:16px;height:14px"><svg width="14" height="12" style="left:0;top:0" shape-rendering="crispEdges"><path d="M2 1h9v9H2zM3 3v6h7V3z" fill="#000" fill-rule="evenodd"/></svg></div><div class="cb" style="left:86px;top:2px;width:16px;height:14px"><svg width="14" height="12" style="left:0;top:0" shape-rendering="crispEdges"><path d="M3 2h2v1h-2zM9 2h2v1h-2zM4 3h2v1h-2zM8 3h2v1h-2zM5 4h4v1h-4zM6 5h2v1h-2zM5 6h4v1h-4zM4 7h2v1h-2zM8 7h2v1h-2zM3 8h2v1h-2zM9 8h2v1h-2z" fill="#000"/></svg></div></div><div class="ce" style="left:3px;top:22px;width:104px;height:64px"></div><svg width="100" height="60" style="left:5px;top:24px" viewBox="0 0 100 60"><rect width="100" height="60" fill="#404040"/></svg></div>
<div class="a" style="left:537px;top:331px;width:192px;height:218px;background:#c0c0c0;border:1px solid;border-color:#c0c0c0 #000 #000 #c0c0c0;box-shadow:inset 1px 1px 0 #fff,inset -1px -1px 0 #808080">
<div class="a act" style="left:2px;top:2px;width:186px;height:15px;background:linear-gradient(90deg,#08107a 0%,#0a2690 40%,#0d55b4 70%,#1080d0 100%)"><div class="a" style="left:3px;top:1px;color:#fff;font-size:11px;line-height:13px;letter-spacing:-0.400px;white-space:nowrap">Controls</div>
<div class="cb" style="left:173px;top:2px;width:11px;height:11px"><svg width="9" height="9" style="left:0;top:0" shape-rendering="crispEdges"><path d="M2 2h2v1h-2zM6 2h2v1h-2zM3 3h4v1h-4zM4 4h2v1h-2zM3 5h4v1h-4zM2 6h2v1h-2zM6 6h2v1h-2z" fill="#000"/></svg></div>
</div>
<!-- tab page -->
<div class="a" style="left:2px;top:38px;width:186px;height:176px;border:1px solid;border-color:#fff #000 #000 #fff;box-shadow:inset -1px -1px 0 #808080"></div>
<!-- inactive tab -->
<div class="a" style="left:80px;top:20px;width:55px;height:18px;border:1px solid;border-color:#fff #000 transparent #fff;border-radius:2px 2px 0 0;box-shadow:inset -1px 0 0 #808080"><div class="a" style="left:4px;top:3px;font-size:11px;line-height:13px;letter-spacing:-0.200px;white-space:nowrap">Brush Tip</div></div>
<!-- active tab -->
<div class="a" style="left:2px;top:18px;width:77px;height:22px;background:#c0c0c0;border:1px solid;border-color:#fff #000 #c0c0c0 #fff;border-bottom:none;border-radius:2px 2px 0 0;box-shadow:inset -1px 0 0 #808080"><div class="a" style="left:8px;top:3px;font-size:11px;line-height:13px;letter-spacing:-0.200px;white-space:nowrap">Tool Controls</div></div>
<div class="a" style="left:80px;top:98px;font-size:11px;line-height:13px;letter-spacing:-0.100px">Zoom</div>
<!-- combo -->
<div class="a" style="left:70px;top:117px;width:47px;height:21px;background:#fff;border:1px solid;border-color:#808080 #fff #fff #808080;box-shadow:inset 1px 1px 0 #000,inset -1px -1px 0 #c0c0c0"><div class="a" style="left:3px;top:3px;font-size:11px;line-height:13px">1:3</div>
<div class="cb" style="left:29px;top:1px;width:15px;height:17px"><svg width="13" height="15" style="left:0;top:0" shape-rendering="crispEdges"><path d="M3 6h7v1h-7zM4 7h5v1h-5zM5 8h3v1h-3zM6 9h1v1h-1z" fill="#000"/></svg></div></div>
</div>
<div id="status" class="a"><div class="a" style="left:3px;top:5px;letter-spacing:-0.400px;white-space:nowrap;line-height:13px">For Help, press F1</div>
<div class="a" style="left:730px;top:3px;width:69px;height:16px;border:1px solid;border-color:#808080 #fff #fff #808080"><div class="a" style="left:2px;top:1px;letter-spacing:-0.300px;white-space:nowrap;line-height:13px">Image: None</div></div>
</div>
<div id="task" class="a">
<!-- start -->
<div class="a" style="left:2px;top:3px;width:54px;height:22px;border:1px solid;border-color:#fff #000 #000 #fff;box-shadow:inset -1px -1px 0 #808080"><div class="a" style="left:21px;top:3px;font-weight:bold;font-size:12px;line-height:14px">Start</div>
<svg width="22" height="20" style="left:0;top:0" viewBox="3 577 22 20"><path d="M10 581.500q3-2.800 6.200-.8t6.300-.7v12q-3 2.500-6.300.7t-6.200.8z" fill="#000"/><path d="M11.300 582.800q1.800-1.500 3.800-.7v3.800q-2-.8-3.800.7z" fill="#e82020"/><path d="M16.600 582.600q2 1 4.300-.2v3.800q-2.300 1.200-4.300.2z" fill="#20c820"/><path d="M11.300 588.300q1.800-1.500 3.800-.7v3.800q-2-.8-3.800.7z" fill="#2038e8"/><path d="M16.600 588.100q2 1 4.300-.2v3.800q-2.300 1.200-4.300.2z" fill="#f0e020"/><g shape-rendering="crispEdges"><path d="M6 582h1v1h-1zM6 584h1v1h-1zM6 586h1v1h-1zM6 588h1v1h-1zM6 590h1v1h-1zM6 592h1v1h-1zM8 582h2v1h-2zM8 592h2v1h-2z" fill="#000"/><path d="M7 583h3v1h-3zM8 585h2v1h-2z" fill="#e82020"/><path d="M7 587h3v1h-3zM8 589h2v1h-2zM7 591h3v1h-3z" fill="#2038e8"/><path d="M8 584h2v1h-2zM8 586h2v1h-2zM8 588h2v1h-2zM8 590h2v1h-2z" fill="#000" opacity=".55"/></g></svg></div>
<svg class="a" style="left:0;top:0" width="800" height="28" viewBox="0 572 800 28">
<g shape-rendering="crispEdges"><rect x="58" y="576" width="1" height="21" fill="#808080"/><rect x="59" y="576" width="1" height="21" fill="#fff"/>
<rect x="62" y="577" width="3" height="19" fill="#c0c0c0"/><rect x="62" y="577" width="1" height="19" fill="#fff"/><rect x="62" y="577" width="3" height="1" fill="#fff"/><rect x="64" y="577" width="1" height="19" fill="#808080"/><rect x="62" y="595" width="3" height="1" fill="#808080"/>
<rect x="282" y="576" width="1" height="21" fill="#808080"/><rect x="283" y="576" width="1" height="21" fill="#fff"/>
<rect x="286" y="577" width="3" height="19" fill="#c0c0c0"/><rect x="286" y="577" width="1" height="19" fill="#fff"/><rect x="286" y="577" width="3" height="1" fill="#fff"/><rect x="288" y="577" width="1" height="19" fill="#808080"/><rect x="286" y="595" width="3" height="1" fill="#808080"/></g>
<!-- desktop -->
<rect x="72" y="580" width="16" height="14" fill="#2878c8"/><path d="M72 594l3-3M88 580l-3 3" stroke="#104080" stroke-width="1"/><path d="M75 588l7-5 4 5-6 5z" fill="#fff" stroke="#404040" stroke-width=".8"/><path d="M77 590l9-10" stroke="#604000" stroke-width="2.400"/><path d="M77.500 589.500l8.500-9.500" stroke="#e8c060" stroke-width="1.200"/><path d="M85.500 580.500l1.500-1.700" stroke="#e04040" stroke-width="2"/>
<!-- smiley -->
<circle cx="103" cy="586.500" r="7.500" fill="#f8e020" stroke="#000" stroke-width="1.200"/><circle cx="100.500" cy="584" r="1.100" fill="#000"/><circle cx="105.500" cy="584" r="1.100" fill="#000"/><path d="M98.500 588q4.500 4 9 0" fill="none" stroke="#000" stroke-width="1.100"/><path d="M102.500 590.500h2.500v2q-1.200 1-2.500 0z" fill="#e02020"/>
<!-- small window -->
<path d="M120.500 582.500h7l2.500 1.500v7.500h-7l-2.500-1.500z" fill="#fff" stroke="#000" stroke-width="1.100"/><path d="M121 583.500h6.500l2 1.200" stroke="#40c0d0" stroke-width="1.300" fill="none"/><path d="M130.500 590l1.500 1-1.500 1" stroke="#808080" fill="none"/>
<!-- mountains -->
<rect x="141" y="579" width="15" height="15" fill="#fff"/><path d="M141 592v-4l3-3.500 2 2.500 2.500-4 3 4.500 2-2 2.500 3v3.500z" fill="#802090"/><rect x="141" y="591" width="15" height="2" fill="#30c0d0"/><rect x="141" y="593" width="15" height="1" fill="#404040"/><path d="M141 581h15" stroke="#d0d0e8" stroke-width="1"/>
<!-- blue blob -->
<rect x="164" y="579" width="16" height="15" fill="#101828"/><circle cx="171" cy="585" r="4.500" fill="#2848b0"/><circle cx="175" cy="583" r="2.500" fill="#5080e0"/><path d="M165 592l5-5 4 4 4-3" stroke="#c0a040" stroke-width="1.500" fill="none"/><circle cx="168" cy="589" r="1.800" fill="#e0e0e0"/>
<!-- globe on yellow -->
<rect x="187" y="579" width="16" height="15" fill="#f0e030"/><circle cx="195" cy="586.500" r="7" fill="#000"/><circle cx="195" cy="586.500" r="4.200" fill="#fff"/><path d="M195 582.500v8M191 586.500h8M192.500 583.500q2.500 3 0 6M197.500 583.500q-2.500 3 0 6" stroke="#000" stroke-width=".9" fill="none"/>
<!-- netscape -->
<rect x="210.500" y="579.500" width="15" height="15" fill="#102060" stroke="#000" stroke-width="1.200"/><rect x="212" y="589" width="12" height="4" fill="#207080"/><text x="213" y="592" font-family="Liberation Serif" font-weight="bold" font-size="13" fill="#fff">N</text>
<!-- flower -->
<g transform="translate(241 587)"><g id="pet"><ellipse cx="0" cy="-5" rx="1.700" ry="3" fill="#e03020"/></g><use href="#pet" transform="rotate(45)"/><ellipse cx="0" cy="-5" rx="1.700" ry="3" fill="#f0c020" transform="rotate(90)"/><ellipse cx="0" cy="-5" rx="1.700" ry="3" fill="#2050d0" transform="rotate(135)"/><ellipse cx="0" cy="-5" rx="1.700" ry="3" fill="#e03020" transform="rotate(180)"/><ellipse cx="0" cy="-5" rx="1.700" ry="3" fill="#20a040" transform="rotate(225)"/><ellipse cx="0" cy="-5" rx="1.700" ry="3" fill="#f08020" transform="rotate(270)"/><ellipse cx="0" cy="-5" rx="1.700" ry="3" fill="#2050d0" transform="rotate(315)"/><circle r="2.300" fill="#806020"/><circle r="1.200" fill="#c0a040"/></g>
<!-- green notepad -->
<g id="gnote"><path d="M258.500 587.500h11.500v6.500h-11.500z" fill="#fff" stroke="#303030" stroke-width="1"/><path d="M259.500 579.500h12.500l-3 9.500h-12.500z" fill="#20c030" stroke="#006000" stroke-width="1"/><path d="M260.500 581h9.500M260 583h9" stroke="#60e070" stroke-width="1"/></g>
<!-- tray: speaker -->
<path d="M652.500 584.500h3l5-5v14l-5-5h-3z" fill="#e8d860" stroke="#605000" stroke-width="1"/><path d="M657 582v9" stroke="#fff8a0" stroke-width="1.200"/><path d="M664 583l2-1M664 586.500h2.500M664 590l2 1" stroke="#909090" stroke-width="1"/>
<!-- tray: monitor -->
<rect x="669.500" y="581.500" width="15" height="10" fill="#606060" stroke="#202020" stroke-width="1"/><rect x="672" y="584" width="10" height="5" fill="#909070"/><rect x="673" y="585" width="3" height="3" fill="#208020"/><rect x="678" y="585" width="2" height="3" fill="#404040"/>
<!-- tray: green note -->
<use href="#gnote" x="431" y="0"/>
<!-- tray: flower bw -->
<g transform="translate(710.500 587)"><ellipse cx="0" cy="-5" rx="1.800" ry="3" fill="#20c030" stroke="#000" stroke-width=".7"/><ellipse cx="0" cy="-5" rx="1.800" ry="3" fill="#fff" stroke="#000" stroke-width=".7" transform="rotate(45)"/><ellipse cx="0" cy="-5" rx="1.800" ry="3" fill="#fff" stroke="#000" stroke-width=".7" transform="rotate(90)"/><ellipse cx="0" cy="-5" rx="1.800" ry="3" fill="#20c030" stroke="#000" stroke-width=".7" transform="rotate(135)"/><ellipse cx="0" cy="-5" rx="1.800" ry="3" fill="#fff" stroke="#000" stroke-width=".7" transform="rotate(180)"/><ellipse cx="0" cy="-5" rx="1.800" ry="3" fill="#20c030" stroke="#000" stroke-width=".7" transform="rotate(225)"/><ellipse cx="0" cy="-5" rx="1.800" ry="3" fill="#fff" stroke="#000" stroke-width=".7" transform="rotate(270)"/><ellipse cx="0" cy="-5" rx="1.800" ry="3" fill="#fff" stroke="#000" stroke-width=".7" transform="rotate(315)"/><circle r="2.600" fill="#000"/></g>
<!-- tray: camera -->
<rect x="721.500" y="585.500" width="13" height="8" fill="#707070" stroke="#202020" stroke-width="1"/><circle cx="728" cy="589.500" r="2.800" fill="#30d0e0" stroke="#104050" stroke-width=".8"/><rect x="723" y="583.500" width="4" height="2" fill="#404040"/><ellipse cx="729" cy="581.500" rx="5" ry="2.300" fill="#f0f0c0" stroke="#a0a060" stroke-width=".8"/><path d="M726 581.500h6" stroke="#e0d040" stroke-width="1"/>
</svg>
<!-- task buttons -->
<div class="a" style="left:293px;top:3px;width:160px;height:22px;border:1px solid;border-color:#fff #000 #000 #fff;box-shadow:inset -1px -1px 0 #808080"><div class="a" style="left:22px;top:4px;font-size:11px;line-height:13px;letter-spacing:-0.400px;white-space:nowrap">Exploring - images</div><svg width="18" height="16" style="left:3px;top:2px" viewBox="0 0 18 16"><path d="M1.500 3.500h4l1.500 1.500h7.500v9h-13z" fill="#f0e080" stroke="#806000" stroke-width="1"/><circle cx="7" cy="8" r="3.600" fill="#c0f0ff" stroke="#204080" stroke-width="1.400"/><path d="M9.800 10.800l4.500 4.500" stroke="#1030a0" stroke-width="2.200"/></svg></div>
<div class="a" style="left:456px;top:3px;width:160px;height:22px;background:#dcdcdc;border:1px solid;border-color:#000 #fff #fff #000;box-shadow:inset 1px 1px 0 #808080"><div class="a" style="left:22px;top:4px;font-weight:bold;font-size:12px;line-height:14px;white-space:nowrap">Paint Shop Pro - Ima...</div><svg width="18" height="16" style="left:3px;top:3px" viewBox="0 0 18 16"><ellipse cx="9" cy="8.500" rx="7.200" ry="5.600" fill="#7a4a10"/><ellipse cx="9" cy="8.500" rx="7.200" ry="5.600" fill="none" stroke="#402000" stroke-width=".8"/><circle cx="9.500" cy="5" r="1.500" fill="#c8b040"/><circle cx="13" cy="6.500" r="1.400" fill="#3060c0"/><circle cx="14" cy="9.500" r="1.300" fill="#c04020"/><circle cx="11.500" cy="12" r="1.500" fill="#e08030"/><circle cx="7.500" cy="12.300" r="1.500" fill="#e8e8e0"/><circle cx="4.500" cy="10" r="1.300" fill="#60a040"/><circle cx="5" cy="6.500" r="1.200" fill="#a0a030"/><circle cx="12" cy="9.300" r="1" fill="#c0c0c0"/><path d="M3.800 1.800l8 8" stroke="#101010" stroke-width="2"/><path d="M3 1l8.500 8.500" stroke="#fff" stroke-width="1.100"/><path d="M15 13.500h2M15 13.500v1.500h2v1.500h-2" stroke="#000" stroke-width=".9" fill="none"/></svg></div>
<!-- tray -->
<div class="a" style="left:644px;top:4px;width:2px;height:20px;border-left:1px solid #808080;border-right:1px solid #fff"></div>
<div class="a" style="left:647px;top:3px;width:151px;height:21px;border:1px solid;border-color:#808080 #fff #fff #808080"><div class="a" style="left:100px;top:4px;font-size:11px;line-height:13px;letter-spacing:-0.300px;white-space:nowrap">2:17 PM</div></div>
<!--TRAY-->
</div>
</body></html>
